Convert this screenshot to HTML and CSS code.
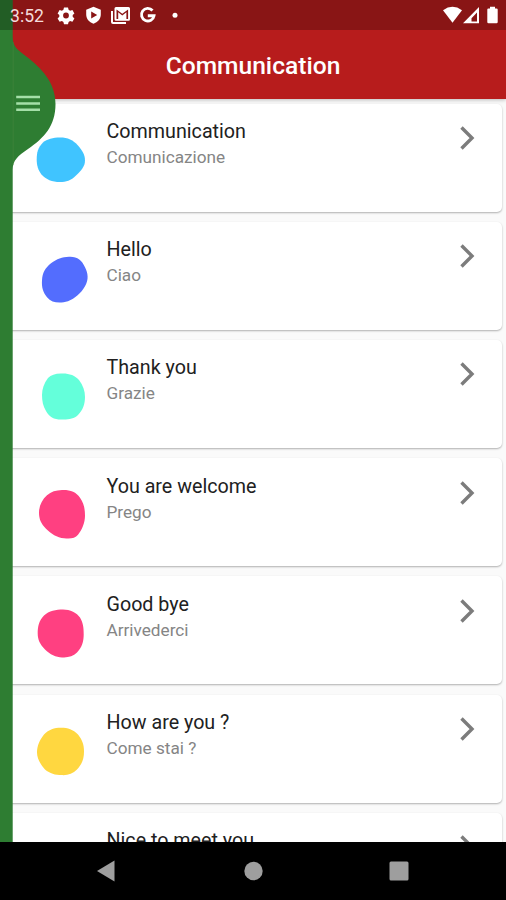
FILE: index.html
```html
<!DOCTYPE html>
<html lang="en">
<head>
<meta charset="utf-8">
<title>Communication</title>
<link rel="stylesheet" href="styles.css">
</head>
<body>
<div class="phone">
  <header class="appbar">
    <div class="status">
      <span class="clock">3:52</span>
      <svg class="status-left" width="130" height="30" viewBox="54 0 130 30" fill="#fff">
        <path fill-rule="evenodd" d="M64 7.500h4l.6 2.300 1.500.9 2.300-.7 2 3.400-1.700 1.700v1.600l1.700 1.700-2 3.300-2.300-.6-1.500.9-.6 2.200h-4l-.6-2.200-1.500-.9-2.300.6-2-3.300 1.700-1.700v-1.600l-1.700-1.700 2-3.400 2.300.7 1.500-.9zM66 12.600a2.900 2.900 0 1 0 0 5.800a2.900 2.900 0 1 0 0-5.800z"/>
        <path fill-rule="evenodd" d="M93.500 6.800l7.300 3v4.700c0 4.500-3 7.600-7.300 9.300-4.300-1.700-7.300-4.800-7.300-9.300V9.800zM91.200 11.600v7l6-3.500z"/>
        <path d="M111 11h2v11h13v2h-13q-2 0-2-2z"/>
        <path fill-rule="evenodd" d="M116 7h12.500q1.500 0 1.500 1.500v10.700q0 1.500-1.500 1.500H116q-1.500 0-1.500-1.500V8.500Q114.500 7 116 7zM116.500 9.500v9.400h1.700v-6.700l4.100 3.300 4.100-3.300v6.700h1.700V9.500l-5.800 4.300z"/>
        <path d="M152.500 10.500A6.300 6.300 0 1 0 154 15.700H147.800" fill="none" stroke="#fff" stroke-width="2.900"/>
        <circle cx="175" cy="15.300" r="2.500"/>
      </svg>
      <svg class="status-right" width="60" height="30" viewBox="442 0 60 30" fill="#fff">
        <path d="M443 10.200Q452.500 3.500 462 10.200L452.500 22.800z"/>
        <path fill-rule="evenodd" d="M479 7v16.300h-16zM477 12.500l-5.500 5.700v3.200h5.500z"/>
        <path d="M490 6.800h5v1.600h1.500q1.200 0 1.200 1.200v12.500q0 1.200-1.200 1.200h-8q-1.200 0-1.200-1.200V9.600q0-1.200 1.200-1.200h1.500z"/>
      </svg>
    </div>
    <h1 class="title">Communication</h1>
  </header>

  <main class="list">
    <article class="card">
      <svg class="blob" viewBox="30 123.600 65 70"><path fill="#40c4ff" d="M60 137C68 137 73 139.500 78 145C82 149.500 85 154 85 160C85 166 81 170 76 175C71 180 66 181.500 60 181.500C52 181.500 46 179 41.500 174C38 169 36.700 165 36.700 159C36.700 152 38 147 43 142C47 138.500 53 137 60 137z"/></svg>
      <div class="text"><h2>Communication</h2><p>Comunicazione</p></div>
      <svg class="chevron" viewBox="0 0 18 26"><path d="M2.500 2.500L13 13L2.500 23.500"/></svg>
    </article>
    <article class="card">
      <svg class="blob" viewBox="30 241.800 65 70"><path fill="#536dfe" d="M69 256.500C77 256 82 260 85 267C88 273 89 279 85 286C81 293 75 298 68 301C60 303.500 52 303 47 297C43 292 41.500 287 42 280C42.500 272 45 268 51 263C57 258.500 62 257 69 256.500z"/></svg>
      <div class="text"><h2>Hello</h2><p>Ciao</p></div>
      <svg class="chevron" viewBox="0 0 18 26"><path d="M2.500 2.500L13 13L2.500 23.500"/></svg>
    </article>
    <article class="card">
      <svg class="blob" viewBox="30 360 65 70"><path fill="#64ffda" d="M61 373.500C68 373 75 375 79 380C83 385 85 391 85 397C85 404 83 410 78 415C74 419 67 420 61 419.500C54 419.500 49 417 46 411C43 406 42 401 42 395C42 389 44 383 48 378C51 375 55 373.500 61 373.500z"/></svg>
      <div class="text"><h2>Thank you</h2><p>Grazie</p></div>
      <svg class="chevron" viewBox="0 0 18 26"><path d="M2.500 2.500L13 13L2.500 23.500"/></svg>
    </article>
    <article class="card">
      <svg class="blob" viewBox="30 478.200 65 70"><path fill="#ff4081" d="M62 490.300C70 490 76 492 80 498C84 504 85 509 85 516C85 523 82 530 78 535C75 539 70 539 64 538.500C57 538 51 534 46 529C41 524 39 519 39 513C39 506 42 500 47 495.500C51 492 56 490.500 62 490.300z"/></svg>
      <div class="text"><h2>You are welcome</h2><p>Prego</p></div>
      <svg class="chevron" viewBox="0 0 18 26"><path d="M2.500 2.500L13 13L2.500 23.500"/></svg>
    </article>
    <article class="card">
      <svg class="blob" viewBox="30 596.400 65 70"><path fill="#ff4081" d="M63 609.800C70 609.800 77 613 80 618C83 623 83.700 628 83.700 635C83.700 642 82 648 77 653C73 657 68 658.200 62 657.800C56 657.800 50 655 45 650C40 645 37.700 640 37.700 634C37.700 627 39 621 44 616C49 611 56 609.800 63 609.800z"/></svg>
      <div class="text"><h2>Good bye</h2><p>Arrivederci</p></div>
      <svg class="chevron" viewBox="0 0 18 26"><path d="M2.500 2.500L13 13L2.500 23.500"/></svg>
    </article>
    <article class="card">
      <svg class="blob" viewBox="30 714.600 65 70"><path fill="#ffd740" d="M61 727.300C68 727.300 73 729 78 734C82 739 84 744 84 751C84 758 82 764 77 769C73 773 68 775 62 774.700C55 774.700 50 773 45 769C41 765 37 758 37 752C37 745 40 739 44 734C49 729 54 727.300 61 727.300z"/></svg>
      <div class="text"><h2>How are you ?</h2><p>Come stai ?</p></div>
      <svg class="chevron" viewBox="0 0 18 26"><path d="M2.500 2.500L13 13L2.500 23.500"/></svg>
    </article>
    <article class="card">
      <svg class="blob" viewBox="0 0 65 70"></svg>
      <div class="text"><h2>Nice to meet you</h2></div>
      <svg class="chevron" viewBox="0 0 18 26"><path d="M2.500 2.500L13 13L2.500 23.500"/></svg>
    </article>
  </main>

  <nav class="navbar">
    <svg width="506" height="58" viewBox="0 842 506 58" fill="#9e9e9e">
      <path d="M97 871L114.500 860.500V881.500z"/>
      <circle cx="253.500" cy="871" r="9.200"/>
      <rect x="389.500" y="861.500" width="19" height="19" rx="1.500"/>
    </svg>
  </nav>

  <svg class="drawer" width="60" height="842" viewBox="0 0 60 842">
    <path fill="#2e7d32" d="M0 0H12.700V37C12.700 47 18 50 27 57C41 68 55.500 82 55.500 104C55.500 126 44 138 28 149C18 156 12.700 160 12.700 170V842H0z"/>
    <path fill="#000" opacity=".25" d="M0 0H12.700V30H0z"/>
    <path stroke="#4f8a45" stroke-width=".7" d="M13.200 42V165" opacity=".6"/>
    <path stroke="#a5dfa8" stroke-width="2.600" d="M16.200 97H40M16.200 103.500H40M16.200 109.800H40"/>
  </svg>
</div>
</body>
</html>
```
FILE: styles.css
```css
* { box-sizing: border-box; margin: 0; padding: 0; }
body { font-family: Roboto, "Liberation Sans", sans-serif; }
svg { display: block; }
.phone {
  position: relative;
  display: flex;
  flex-direction: column;
  width: 506px;
  height: 900px;
  overflow: hidden;
  background: #fafafa;
}
.appbar {
  flex: none;
  height: 99px;
  background: #b71c1c;
  box-shadow: 0 1px 4px rgba(0, 0, 0, .25);
}
.status {
  display: flex;
  height: 30px;
  background: #891515;
}
.clock {
  position: relative;
  z-index: 2;
  width: 54px;
  padding-left: 10px;
  color: #f4dcdc;
  font-size: 17.600px;
  line-height: 32px;
}
.status-right { margin-left: auto; margin-right: 4px; }
.title {
  color: #fff;
  font-size: 24.600px;
  font-weight: 500;
  line-height: 72px;
  text-align: center;
}
.list {
  display: flex;
  flex: 1;
  flex-direction: column;
  gap: 10.200px;
  min-height: 0;
  padding: 4.600px 4px 0 5px;
  overflow: hidden;
}
.card {
  display: flex;
  flex: none;
  height: 108px;
  padding: 20px 25px 0 25px;
  border-radius: 5px;
  background: #fff;
  box-shadow: 0 1px 2px rgba(0, 0, 0, .3);
}
.blob { flex: none; width: 65px; height: 70px; }
.text { flex: 1; margin-top: -3.500px; padding-left: 11.500px; }
h2 {
  color: #212121;
  font-size: 19.700px;
  font-weight: 400;
  line-height: 24px;
}
p {
  margin-top: 2px;
  color: #858585;
  font-size: 17.200px;
  line-height: 22px;
}
.chevron {
  width: 18px;
  height: 26px;
  margin-top: 1.500px;
  fill: none;
  stroke: #7c7c7c;
  stroke-width: 3.400px;
}
.navbar { flex: none; height: 58px; background: #000; }
.drawer { position: absolute; z-index: 1; top: 0; left: 0; }
```
